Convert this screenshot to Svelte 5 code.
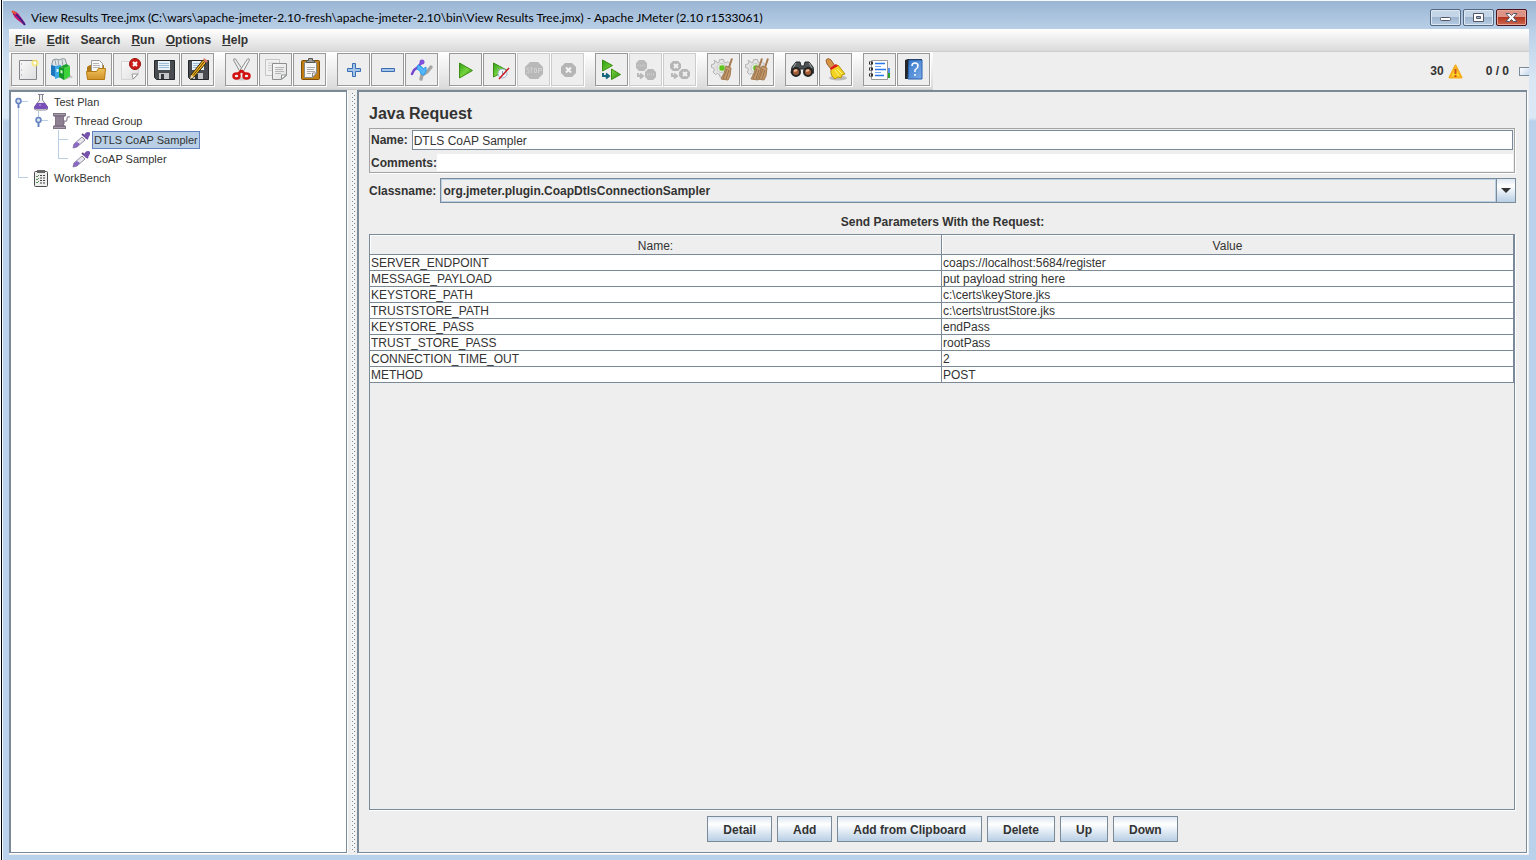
<script>
	const menus = [
		{ key: 'F', rest: 'ile' },
		{ key: 'E', rest: 'dit' },
		{ key: '', rest: 'Search' },
		{ key: 'R', rest: 'un' },
		{ key: 'O', rest: 'ptions' },
		{ key: 'H', rest: 'elp' }
	];

	const toolbar = [
		['New', 'Templates', 'Open', 'Close', 'Save', 'Save as'],
		['Cut', 'Copy', 'Paste'],
		['Expand all', 'Collapse all', 'Toggle'],
		['Start', 'Start no pauses', 'Stop', 'Shutdown'],
		['Remote start all', 'Remote stop all', 'Remote shutdown all'],
		['Clear', 'Clear all'],
		['Find', 'Reset search'],
		['Function helper', 'Help']
	];

	const disabled = ['Stop', 'Shutdown', 'Remote stop all', 'Remote shutdown all'];

	const floppy = `
		<path d="M3.500 3.500h20v19h-18l-2-2z" fill="#484c50" stroke="#25282a"/>
		<path d="M7 4h12v9h-12z" fill="#e9f1f8"/>
		<path d="M8 6.500h10M8 8.500h10M8 10.500h10" stroke="#9dbcd8"/>
		<path d="M8 16h10v6h-10z" fill="#c4c6c8"/>
		<path d="M10 17h3v5h-3z" fill="#33373a"/>`;

	const gear = `
		<path d="M8.500 2.500h4l.500 2.500 2 1 2-1.500 2.500 2.500-1.500 2 1 5-2 4-4 2h-4l-.500-2.500-2-1-2 1-2.500-2.500 1.500-2-1-2-2-.500v-3l2.500-.500 1-2-1-2L5 4.500l2 1.500 1-1z" fill="#e4e4e4" stroke="#b2b2b2"/>
		<circle cx="10.500" cy="11" r="4.500" fill="#f3f3f3" stroke="#c4c4c4"/>
		<circle cx="11" cy="11" r="3" fill="#5cc61c" stroke="#a5d585"/>`;

	const broom = `
		<path d="M21 1.500l-3 9" stroke="#a87c52" stroke-width="2"/>
		<path d="M15 9l5 2-1 8-2 4-7-1q4-6 5-13z" fill="#c49a6c" stroke="#a37b50"/>
		<path d="M16 12l-4 10M18 13l-3 9" stroke="#98714a"/>`;

	const icons = {
		New: `
			<path d="M4.500 3.500h17v19h-17z" fill="url(#paper)" stroke="#83858a"/>
			<path d="M6 7h1M6 13h1M6 18h1" stroke="#999"/>
			<circle cx="20" cy="6" r="3.500" fill="#f7e96e" opacity=".8"/>
			<circle cx="20" cy="6" r="1.500" fill="#fff"/>`,
		Templates: `
			<path d="M3 6q0-4 4-4l3 1q3-2 6-1l2 6v3H3z" fill="#dfe5e8" stroke="#8b979c"/>
			<path d="M6 3l1 5M9 3l1 6M13 3l1 6" stroke="#98a4aa"/>
			<path d="M2 8l4 1v11l-4-2z" fill="#1b75bf"/>
			<path d="M6 9l6-1v12l-6 2z" fill="#3ca7e5"/>
			<path d="M7.500 12h2v3h-2z" fill="#dff2fb"/>
			<path d="M24 20l-9 3-2-2 8-3z" fill="#aaa" opacity=".7"/>
			<path d="M10 10l5 1v12l-5-3z" fill="#159628"/>
			<path d="M15 11l-4-1 6-3 4 2z" fill="#1aa42c"/>
			<path d="M15 11l6-2v10l-6 4z" fill="#3bd23b"/>
			<path d="M11.500 13l2 .500v3l-2-.500z" fill="#d0f6c8"/>`,
		Open: `
			<path d="M4 10l3-2h14v10H4z" fill="#b27816"/>
			<path d="M8.500 3.500h8l3 3v11h-11z" fill="#f8f8f8" stroke="#999"/>
			<path d="M10 6.500h6M10 8.500h7M10 10.500h7" stroke="#b5b5b5"/>
			<path d="M3.500 14.500h10l2-3h7l-1 11h-17z" fill="url(#gold)" stroke="#b3790e"/>`,
		Close: `
			<path d="M4.500 4.500h17v13l-5 5h-12z" fill="url(#paper)" stroke="#d5d5d5"/>
			<path d="M21 17l-5 5-1-5z" fill="#fff" stroke="#999"/>
			<circle cx="18" cy="7" r="5.500" fill="#cb1d16" stroke="#99100c"/>
			<path d="M16 5l4 4M20 5l-4 4" stroke="#fff" stroke-width="2"/>`,
		Save: floppy,
		'Save as': `${floppy}
			<path d="M6 18L18 3l3 3L9 20l-4 2z" fill="#f2b51d" stroke="#33250a"/>
			<path d="M8 18.500L19 5" stroke="#5a3c05"/>
			<path d="M18 3l1-2 4 3-2 2z" fill="#d77a68"/>
			<path d="M6 18l3 2-4 2z" fill="#f1d8ac"/>`,
		Cut: `
			<ellipse cx="13" cy="22" rx="8" ry="1.500" fill="#ccc"/>
			<path d="M4.500 3q0-2 2-1l8 12-3 2z" fill="#e8e8e8" stroke="#929292"/>
			<path d="M20.500 3q0-2-2-1l-8 12 3 2z" fill="#efefef" stroke="#929292"/>
			<ellipse cx="7.500" cy="19" rx="3" ry="2.500" fill="none" stroke="#d31212" stroke-width="2.500"/>
			<ellipse cx="17.500" cy="19" rx="3" ry="2.500" fill="none" stroke="#d31212" stroke-width="2.500"/>
			<path d="M9 17l3-3h1l3 3" fill="none" stroke="#d31212" stroke-width="2.500"/>`,
		Copy: `
			<path d="M2.500 2.500h14v16h-14z" fill="#f1f1f1" stroke="#c5c5c5"/>
			<path d="M5 6h9M5 8.500h4M5 11h4M5 13.500h4" stroke="#ccc"/>
			<path d="M9.500 6.500h14v12l-5 4h-9z" fill="url(#paper)" stroke="#8e9090"/>
			<path d="M12 10.500h9M12 12.500h8M12 14.500h9M12 16.500h6" stroke="#b5b5b5"/>
			<path d="M23.500 18l-5 4v-4z" fill="#fff" stroke="#8e9090"/>`,
		Paste: `
			<rect x="4.500" y="3.500" width="18" height="19" rx="1" fill="#c17d11" stroke="#7d4e08"/>
			<path d="M7.500 5.500h12v11l-4 4h-8z" fill="#f5f5f5" stroke="#888a85"/>
			<path d="M10 10.500h8M10 12.500h7M10 14.500h8M10 16.500h4" stroke="#aaa"/>
			<path d="M19.500 16l-4 4v-4z" fill="#fff" stroke="#888"/>
			<path d="M9.500 5.500v-2h2v-2h4v2h2v2z" fill="#9a9c98" stroke="#555753"/>`,
		'Expand all': `
			<path d="M11.500 6.500h3v5h5v3h-5v5h-3v-5h-5v-3h5z" fill="#a4c5e9" stroke="#3a6db1"/>`,
		'Collapse all': `<path d="M6.500 11.500h13v3h-13z" fill="#a4c5e9" stroke="#3a6db1"/>`,
		Toggle: `
			<path d="M12 22l1-4 5-3 4-5" fill="none" stroke="#a5a5a5" stroke-width="3.500" stroke-linecap="round" stroke-linejoin="round"/>
			<path d="M13 5l-4 5-4 3-2 4" fill="none" stroke="#7846ce" stroke-width="2.500" stroke-linecap="round"/>
			<circle cx="13" cy="5" r="2.500" fill="#824fda"/>
			<path d="M9 8l4 2 1 2 3-2v4l-2 4-3-1-1-3-3-2z" fill="#55b7fb" stroke="#2c9bf0"/>`,
		Start: `<path d="M6.500 6l13 7.500-13 7.500z" fill="url(#green)" stroke="#3d8d14"/>`,
		'Start no pauses': `
			<path d="M6.500 6l13 7-13 7z" fill="url(#green)" stroke="#3d8d14"/>
			<circle cx="15.500" cy="16.500" r="4.500" fill="#eef5fb" stroke="#9bb3c8"/>
			<path d="M15.500 14v3h2M10 11l2 2" fill="none" stroke="#86a1b8"/>
			<path d="M22 11l-10 11" stroke="#d01820" stroke-width="1.500"/>`,
		Stop: `
			<path d="M9 5h8l5 5v7l-5 5H9l-5-5v-7z" fill="#b8b8b8"/>
			<path d="M8 11H6v2h2v3H5M9 11h3M10.500 11v5M13.500 11.500h2v4h-2zM17.500 16v-4.500h3v2h-3" fill="none" stroke="#d0d0d0"/>`,
		Shutdown: `
			<path d="M10 6h7l4 4v6l-4 4h-7l-4-4v-6z" fill="#b5b5b5"/>
			<path d="M11 10.500l5 5M16 10.500l-5 5" stroke="#f4f4f4" stroke-width="2"/>`,
		'Remote start all': `
			<path d="M3.500 3l10 5.500-10 5.500zM12.500 12l9 5.500-9 5z" fill="url(#green)" stroke="#3d8d14"/>
			<path d="M4 16v3h5M7 16.500l3 2.500-3 2.500" fill="none" stroke="#15657c" stroke-width="2"/>`,
		'Remote stop all': `
			<path d="M6 3h5l3 3v5l-3 3H6l-3-3V6zM15 12h5l3 3v5l-3 3h-5l-3-3v-5z" fill="#b9b9b9"/>
			<path d="M5 8.500h7M14 17.500h7" stroke="#cdcdcd" stroke-width="2" stroke-dasharray="1 1"/>
			<path d="M5 16v3h4M7 16.500l3 2.500-3 2.500" fill="none" stroke="#b9b9b9" stroke-width="2"/>`,
		'Remote shutdown all': `
			<path d="M6 4h5l3 3v4l-3 3H6l-3-3V7zM15 12h5l3 3v4l-3 3h-5l-3-3v-4z" fill="#b5b5b5"/>
			<path d="M7 7l4 4M11 7l-4 4M16 15l4 4M20 15l-4 4" stroke="#f1f1f1" stroke-width="2"/>
			<path d="M5 16v3h4M7 16.500l3 2.500-3 2.500" fill="none" stroke="#b9b9b9" stroke-width="2"/>`,
		Clear: gear + broom,
		'Clear all': `${gear}<g transform="translate(-4 0)">${broom}</g><g transform="translate(2 0)">${broom}</g>`,
		Find: `
			<path d="M3 10l4-5h4l1 4h3l1-4h4l4 5 1 6h-9l-1-4h-4l-1 4H2z" fill="#4c5153" stroke="#26292b"/>
			<path d="M7 6l-3 5M20 6l3 5" stroke="#a2a8aa"/>
			<circle cx="7" cy="15" r="4" fill="#a25d36" stroke="#222" stroke-width="2"/>
			<circle cx="19" cy="15" r="4" fill="#a25d36" stroke="#222" stroke-width="2"/>
			<path d="M5 14l3-1M17 14l3-1" stroke="#efb898" stroke-width="2"/>`,
		'Reset search': `
			<ellipse cx="15" cy="21" rx="9" ry="2.500" fill="#bbb"/>
			<path d="M3 3q2-3 5 0l4 6-4 3-4-5z" fill="#d69447" stroke="#9b612a"/>
			<path d="M8 12l7-4 7 9-3 1-1 3-3-1-3 2q-5-3-4-10z" fill="#f2d321" stroke="#b8940b"/>
			<path d="M7 11l6-4 2 2-7 4z" fill="#e11b1b"/>
			<path d="M12 13l4 6M14 12l5 5" stroke="#fff27d"/>`,
		'Function helper': `
			<path d="M20 11h3v5h-3z" fill="#5391e8"/><path d="M20 16h3v5h-3z" fill="#29a229"/>
			<path d="M4.500 3.500h16v19h-16z" fill="#fff" stroke="#999"/>
			<path d="M2 6h4M2 12h4M2 18h4" stroke="#333" stroke-width="3"/>
			<path d="M3 6h1M3 12h1M3 18h1" stroke="#ddd" stroke-width="2"/>
			<path d="M8 6.500h10M8 12.500h11M8 18.500h9" stroke="#2877ed" stroke-width="1.500"/>
			<path d="M8 9.500h6M8 15.500h6" stroke="#73aaf6"/>`,
		Help: `
			<path d="M4 3l3-1h14v20H4z" fill="#23272c"/>
			<path d="M8 3h13v19H7z" fill="url(#book)" stroke="#2a61ad"/>
			<path d="M11 9q0-3 3-3t3 3q0 2-3 4v2" fill="none" stroke="#fff" stroke-width="1.500"/>
			<circle cx="14" cy="18" r="1" fill="#fff"/>`
	};

	const treeIcons = {
		flask: `
			<path d="M6 1.500h6M7.500 2v5L2.500 14q-1 3 2 3h9q3 0 2-3l-5-7V2" fill="#eef0f4" stroke="#85828e"/>
			<path d="M5 10h8l3 4q0 2-2 2H4q-2 0-2-2z" fill="#7950b9"/>
			<circle cx="8" cy="12" r="1" fill="#a98ad8"/>`,
		spool: `
			<path d="M12 12V9q3 1 3-2t3-2" fill="none" stroke="#9c93a0" stroke-width="1.500"/>
			<path d="M1 1h13v3l-2 1v8l2 1v3H1v-3l2-1V5L1 4z" fill="#817386"/>
			<path d="M4 6h7M4 8h7M4 10h7M4 12h7" stroke="#9a8e9e"/>
			<path d="M2 2.500h11M2 15.500h11" stroke="#a79cab"/>`,
		dropper: `
			<path d="M10 6l3 3-8 7-4 1 1-4z" fill="#e9e6f0" stroke="#8f8a9b"/>
			<path d="M5 11l3 2-3 3-4 1 1-4z" fill="#8a68c4"/>
			<path d="M10 3l6 5" stroke="#694598" stroke-width="2"/>
			<path d="M12 5q1-4 4-4t2 3-4 4z" fill="#7653ad"/>`,
		clipboard: `
			<rect x="2.500" y="2.500" width="13" height="15" rx="1" fill="#eee" stroke="#4d4d4d"/>
			<path d="M5 1h8v3H5z" fill="#666"/>
			<path d="M8 6.500h6M8 9h6M8 11.500h6M8 14h6" stroke="#444" stroke-dasharray="2 1"/>
			<path d="M4 7l1 1 2-2M4 10l1 1 2-2M4 13l1 1 2-2" fill="none" stroke="#5b8f55"/>`
	};

	const tree = [
		{
			label: 'Test Plan',
			icon: 'flask',
			children: [
				{
					label: 'Thread Group',
					icon: 'spool',
					children: [
						{ label: 'DTLS CoAP Sampler', icon: 'dropper' },
						{ label: 'CoAP Sampler', icon: 'dropper' }
					]
				}
			]
		},
		{ label: 'WorkBench', icon: 'clipboard' }
	];

	const params = [
		['SERVER_ENDPOINT', 'coaps://localhost:5684/register'],
		['MESSAGE_PAYLOAD', 'put payload string here'],
		['KEYSTORE_PATH', 'c:\\certs\\keyStore.jks'],
		['TRUSTSTORE_PATH', 'c:\\certs\\trustStore.jks'],
		['KEYSTORE_PASS', 'endPass'],
		['TRUST_STORE_PASS', 'rootPass'],
		['CONNECTION_TIME_OUT', '2'],
		['METHOD', 'POST']
	];

	const actions = ['Detail', 'Add', 'Add from Clipboard', 'Delete', 'Up', 'Down'];

	let selected = $state('DTLS CoAP Sampler');
	let name = $state('DTLS CoAP Sampler');
	let comments = $state('');
</script>

{#snippet branch(nodes)}
	<ul>
		{#each nodes as node}
			<li>
				{#if node.children}
					<button class="handle" aria-label="Collapse {node.label}">
						<svg width="9" height="12" viewBox="0 0 9 12">
							<path d="M4.500 5v6" stroke="#6382bf" stroke-width="2" />
							<circle cx="4.500" cy="4" r="2.500" fill="#d5e0f0" stroke="#6382bf" stroke-width="1.500" />
						</svg>
					</button>
				{/if}
				<button class="node" class:selected={node.label === selected} onclick={() => (selected = node.label)}>
					<svg width="18" height="18" viewBox="0 0 18 18" fill="none">{@html treeIcons[node.icon]}</svg>
					<span>{node.label}</span>
				</button>
				{#if node.children}
					{@render branch(node.children)}
				{/if}
			</li>
		{/each}
	</ul>
{/snippet}

<svg class="defs" width="0" height="0" aria-hidden="true">
	<linearGradient id="paper" x2="1" y2="1"><stop stop-color="#fafafa" /><stop offset="1" stop-color="#dedede" /></linearGradient>
	<linearGradient id="gold" x2="0" y2="1"><stop stop-color="#efc15c" /><stop offset="1" stop-color="#d1932a" /></linearGradient>
	<linearGradient id="green" x2="1" y2="1"><stop stop-color="#2e9e14" /><stop offset=".5" stop-color="#74d43c" /><stop offset="1" stop-color="#2d8a10" /></linearGradient>
	<linearGradient id="book" x2="1" y2="1"><stop stop-color="#3476c9" /><stop offset="1" stop-color="#7aaae8" /></linearGradient>
</svg>

<div class="window">
	<header>
		<svg width="16" height="16" viewBox="0 0 16 16">
			<path d="M1 1q5 0 8 5l5 7-1 2-5-4Q2 7 1 1z" fill="#c5156b" />
			<path d="M3 3q5 3 11 12" fill="none" stroke="#40208e" stroke-width="2" />
			<path d="M1 1l4 3" stroke="#ef5530" stroke-width="2" />
		</svg>
		<h1>View Results Tree.jmx (C:\wars\apache-jmeter-2.10-fresh\apache-jmeter-2.10\bin\View Results Tree.jmx) - Apache JMeter (2.10 r1533061)</h1>
		<div class="controls">
			<button aria-label="Minimize">
				<svg width="13" height="11" viewBox="0 0 13 11"><rect x="1.500" y="5.500" width="10" height="3" rx="1" fill="#fff" stroke="#535666" /></svg>
			</button>
			<button aria-label="Maximize">
				<svg width="13" height="11" viewBox="0 0 13 11"><path d="M1.500 1.500h10v8h-10zM4.500 4.500h4v2h-4z" fill="#fff" fill-rule="evenodd" stroke="#535666" /></svg>
			</button>
			<button class="close" aria-label="Close window">
				<svg width="13" height="11" viewBox="0 0 13 11"><path d="M1 1.500h3.500l2 2 2-2H12l-3.500 4 3.500 4H8.500l-2-2-2 2H1l3.500-4z" fill="#fff" stroke="#535666" /></svg>
			</button>
		</div>
	</header>

	<nav>
		{#each menus as menu}
			<button>{#if menu.key}<u>{menu.key}</u>{/if}{menu.rest}</button>
		{/each}
	</nav>

	<div class="bar">
		<div class="tools">
			{#each toolbar as group}
				<div class="group">
					{#each group as tool}
						<button aria-label={tool} title={tool} disabled={disabled.includes(tool)}>
							<svg width="25" height="25" viewBox="0 0 25 25" fill="none">{@html icons[tool]}</svg>
						</button>
					{/each}
				</div>
			{/each}
		</div>
		<div class="status">
			<span>30</span>
			<svg width="15" height="15" viewBox="0 0 15 15">
				<path d="M7.500 1.500l6 12h-12z" fill="#ffd42a" stroke="#f5ae20" stroke-width="2" stroke-linejoin="round" />
				<path d="M7.500 5v5M7.500 11v2" stroke="#c8501a" stroke-width="2" />
			</svg>
			<span class="threads">0 / 0</span>
			<i></i>
		</div>
	</div>

	<main>
		<aside>{@render branch(tree)}</aside>
		<div class="divider"></div>
		<section>
			<h2>Java Request</h2>
			<div class="fields">
				<label>
					Name:
					<input type="text" bind:value={name} />
				</label>
				<label class="comments">
					Comments:
					<input type="text" bind:value={comments} />
				</label>
			</div>
			<label class="classname">
				Classname:
				<span class="combo">
					<select>
						<option>org.jmeter.plugin.CoapDtlsConnectionSampler</option>
					</select>
					<span class="arrow">
						<svg width="10" height="5" viewBox="0 0 10 5"><path d="M0 0h10L5 5z" fill="#333" /></svg>
					</span>
				</span>
			</label>
			<h3>Send Parameters With the Request:</h3>
			<div class="scroll">
				<table>
					<thead>
						<tr>
							<th>Name:</th>
							<th>Value</th>
						</tr>
					</thead>
					<tbody>
						{#each params as [key, value]}
							<tr>
								<td>{key}</td>
								<td>{value}</td>
							</tr>
						{/each}
					</tbody>
				</table>
			</div>
			<div class="actions">
				{#each actions as action}
					<button>{action}</button>
				{/each}
			</div>
		</section>
	</main>
</div>

<style>
	:global(body) {
		margin: 0;
		background: #fff;
	}
	* {
		box-sizing: border-box;
	}
	button,
	input,
	select {
		margin: 0;
		padding: 0;
		border: none;
		border-radius: 0;
		background: none;
		color: inherit;
		font: inherit;
	}
	svg {
		display: block;
		flex: none;
	}
	.defs {
		position: absolute;
	}
	.window {
		display: flex;
		flex-direction: column;
		height: 100vh;
		margin-left: 1px;
		padding: 0 7px 5px;
		border-left: 1px solid #000;
		box-shadow: inset 1px 1px #f4f9fd;
		background: linear-gradient(#98b4d2, #bad0e8 30px, #d9e7f5 80px, #dbe8f5 118px, #b9d1ea 121px);
		color: #333;
		font: bold 12px/16px 'Liberation Sans', Arial, sans-serif;
	}
	header {
		display: flex;
		flex: none;
		align-items: center;
		height: 29px;
		padding: 6px 2px 0;
	}
	header svg {
		margin-right: 4px;
	}
	h1 {
		flex: 1;
		margin: 0;
		overflow: hidden;
		color: #000;
		font: 12px/16px Lato, 'Segoe UI', sans-serif;
		white-space: nowrap;
	}
	.controls {
		display: flex;
		gap: 2px;
	}
	.controls button {
		display: flex;
		align-items: center;
		justify-content: center;
		width: 31px;
		height: 17px;
		border: 1px solid #53677f;
		border-radius: 2px;
		box-shadow: inset 0 0 0 1px #dce8f5;
		background: linear-gradient(#c4d5e8 50%, #9fb6d0 50%, #b5cbe2);
	}
	.controls svg {
		margin: 0;
	}
	.controls .close {
		border-color: #4c1420;
		box-shadow: inset 0 0 0 1px #e5a896;
		background: linear-gradient(#dc9284 50%, #b6361f 50%, #cc6850);
	}
	nav {
		display: flex;
		flex: none;
		gap: 11px;
		height: 23px;
		padding: 0 6px;
		border-bottom: 1px solid #ccc;
		background: linear-gradient(#fff, #dadada);
	}
	.bar {
		display: flex;
		flex: none;
		justify-content: space-between;
		height: 38px;
		background: #eee;
	}
	.tools {
		display: flex;
		gap: 10px;
		padding: 1px 2px;
		border-bottom: 1px solid #ccc;
		background: linear-gradient(#fff, #dadada);
	}
	.group {
		display: flex;
	}
	.group button {
		display: flex;
		align-items: center;
		justify-content: center;
		width: 33px;
		height: 33px;
		margin-right: 1px;
		border: 1px solid #999;
		box-shadow: 1px 1px #fff;
		background: #eee;
	}
	.group button:disabled {
		border-color: #ccc;
	}
	.status {
		display: flex;
		align-items: center;
		gap: 4px;
	}
	.threads {
		margin-left: 19px;
	}
	.status i {
		width: 10px;
		height: 9px;
		margin-left: 6px;
		border: 1px solid #7a8a99;
		border-right: none;
		background: linear-gradient(135deg, #fff, #c5d8eb);
	}
	main {
		display: flex;
		flex: 1;
		min-height: 0;
		background: #eee;
	}
	aside {
		flex: none;
		width: 338px;
		margin-bottom: 2px;
		border: solid #7a8a99;
		border-width: 2px 1px 1px 2px;
		box-shadow: 1px 1px #fff;
		background: #fff;
		font: 11px/16px 'Liberation Sans', Arial, sans-serif;
	}
	ul {
		margin: 0;
		padding-left: 20px;
		list-style: none;
	}
	aside > :global(ul) {
		padding-left: 21px;
	}
	li {
		position: relative;
	}
	/* connector lines between sibling nodes */
	li::before,
	li::after {
		content: '';
		position: absolute;
		left: -14px;
		background: #b8cfe5;
	}
	li::before {
		top: 9px;
		width: 10px;
		height: 1px;
	}
	li::after {
		top: 0;
		bottom: 0;
		width: 1px;
	}
	li:last-child::after {
		bottom: auto;
		height: 9px;
	}
	aside > :global(ul > li:first-child::after) {
		top: 9px;
	}
	.handle {
		position: absolute;
		z-index: 1;
		top: 5px;
		left: -18px;
	}
	.node {
		display: flex;
		align-items: center;
		gap: 2px;
		height: 19px;
	}
	.node span {
		padding: 0 1px;
		border: 1px solid transparent;
	}
	.node.selected span {
		border-color: #6382bf;
		background: #b8cfe5;
	}
	.divider {
		flex: none;
		width: 4px;
		margin: 3px 2px 3px 4px;
		background:
			conic-gradient(from 0deg at 1px 1px, transparent 75%, #7a8a99 0) 1px 0 / 4px 4px,
			conic-gradient(from 0deg at 1px 1px, transparent 75%, #7a8a99 0) 3px 2px / 4px 4px,
			#f5f5f5;
	}
	section {
		display: flex;
		flex: 1;
		flex-direction: column;
		min-width: 0;
		margin: 0 2px 2px 0;
		padding: 10px;
		border: solid #7a8a99;
		border-width: 2px 1px 1px 2px;
		box-shadow: 1px 1px #fff;
	}
	h2 {
		margin: 0 0 2px;
		font-size: 16px;
		line-height: 24px;
	}
	.fields {
		margin-right: 1px;
		padding: 1px;
		border: 1px solid #a3a3a3;
		box-shadow: 1px 1px #fff;
	}
	label {
		display: flex;
		align-items: center;
	}
	.fields input {
		flex: 1;
		min-width: 0;
		height: 20px;
		margin-left: 4px;
		padding: 1px 1px 0;
		border: 1px solid #7a8a99;
		box-shadow: inset -1px -1px #fff;
		background: #fff;
		font-weight: normal;
	}
	.fields .comments {
		margin-top: 4px;
	}
	.fields .comments input {
		height: 17px;
		margin-left: 0;
		border: none;
	}
	.classname {
		margin-top: 5px;
	}
	.combo {
		display: flex;
		flex: 1;
		height: 25px;
		margin-left: 4px;
		border: 1px solid #7a8a99;
	}
	select {
		flex: 1;
		appearance: none;
		padding: 0 1px;
		border: 1px solid #b8cfe5;
	}
	.arrow {
		display: flex;
		align-items: center;
		justify-content: center;
		width: 19px;
		border-left: 1px solid #7a8a99;
		background: linear-gradient(#dde8f3, #fff 30%, #b8cfe5);
		pointer-events: none;
	}
	h3 {
		margin: 11px 0 4px;
		font-size: 12px;
		line-height: 16px;
		text-align: center;
	}
	.scroll {
		flex: 1;
		min-height: 0;
		margin-right: 1px;
		overflow: hidden;
		border: 1px solid #7a8a99;
		box-shadow: 1px 1px #fff;
	}
	table {
		width: 100%;
		border-collapse: separate;
		border-spacing: 0;
		table-layout: fixed;
		font-weight: normal;
	}
	th,
	td {
		padding: 1px 1px 0;
		border: solid #7a8a99;
		border-width: 0 1px 1px 0;
		font-weight: normal;
		line-height: 14px;
	}
	th {
		height: 20px;
		padding-top: 3px;
		box-shadow: inset 1px 1px #fff;
	}
	td {
		background: #fff;
	}
	.actions {
		display: flex;
		justify-content: center;
		gap: 5px;
		margin-top: 6px;
	}
	.actions button {
		height: 26px;
		padding: 1px 15px 0;
		border: 1px solid #7a8a99;
		background: linear-gradient(#dde8f3, #fff 30%, #b8cfe5);
	}
</style>
